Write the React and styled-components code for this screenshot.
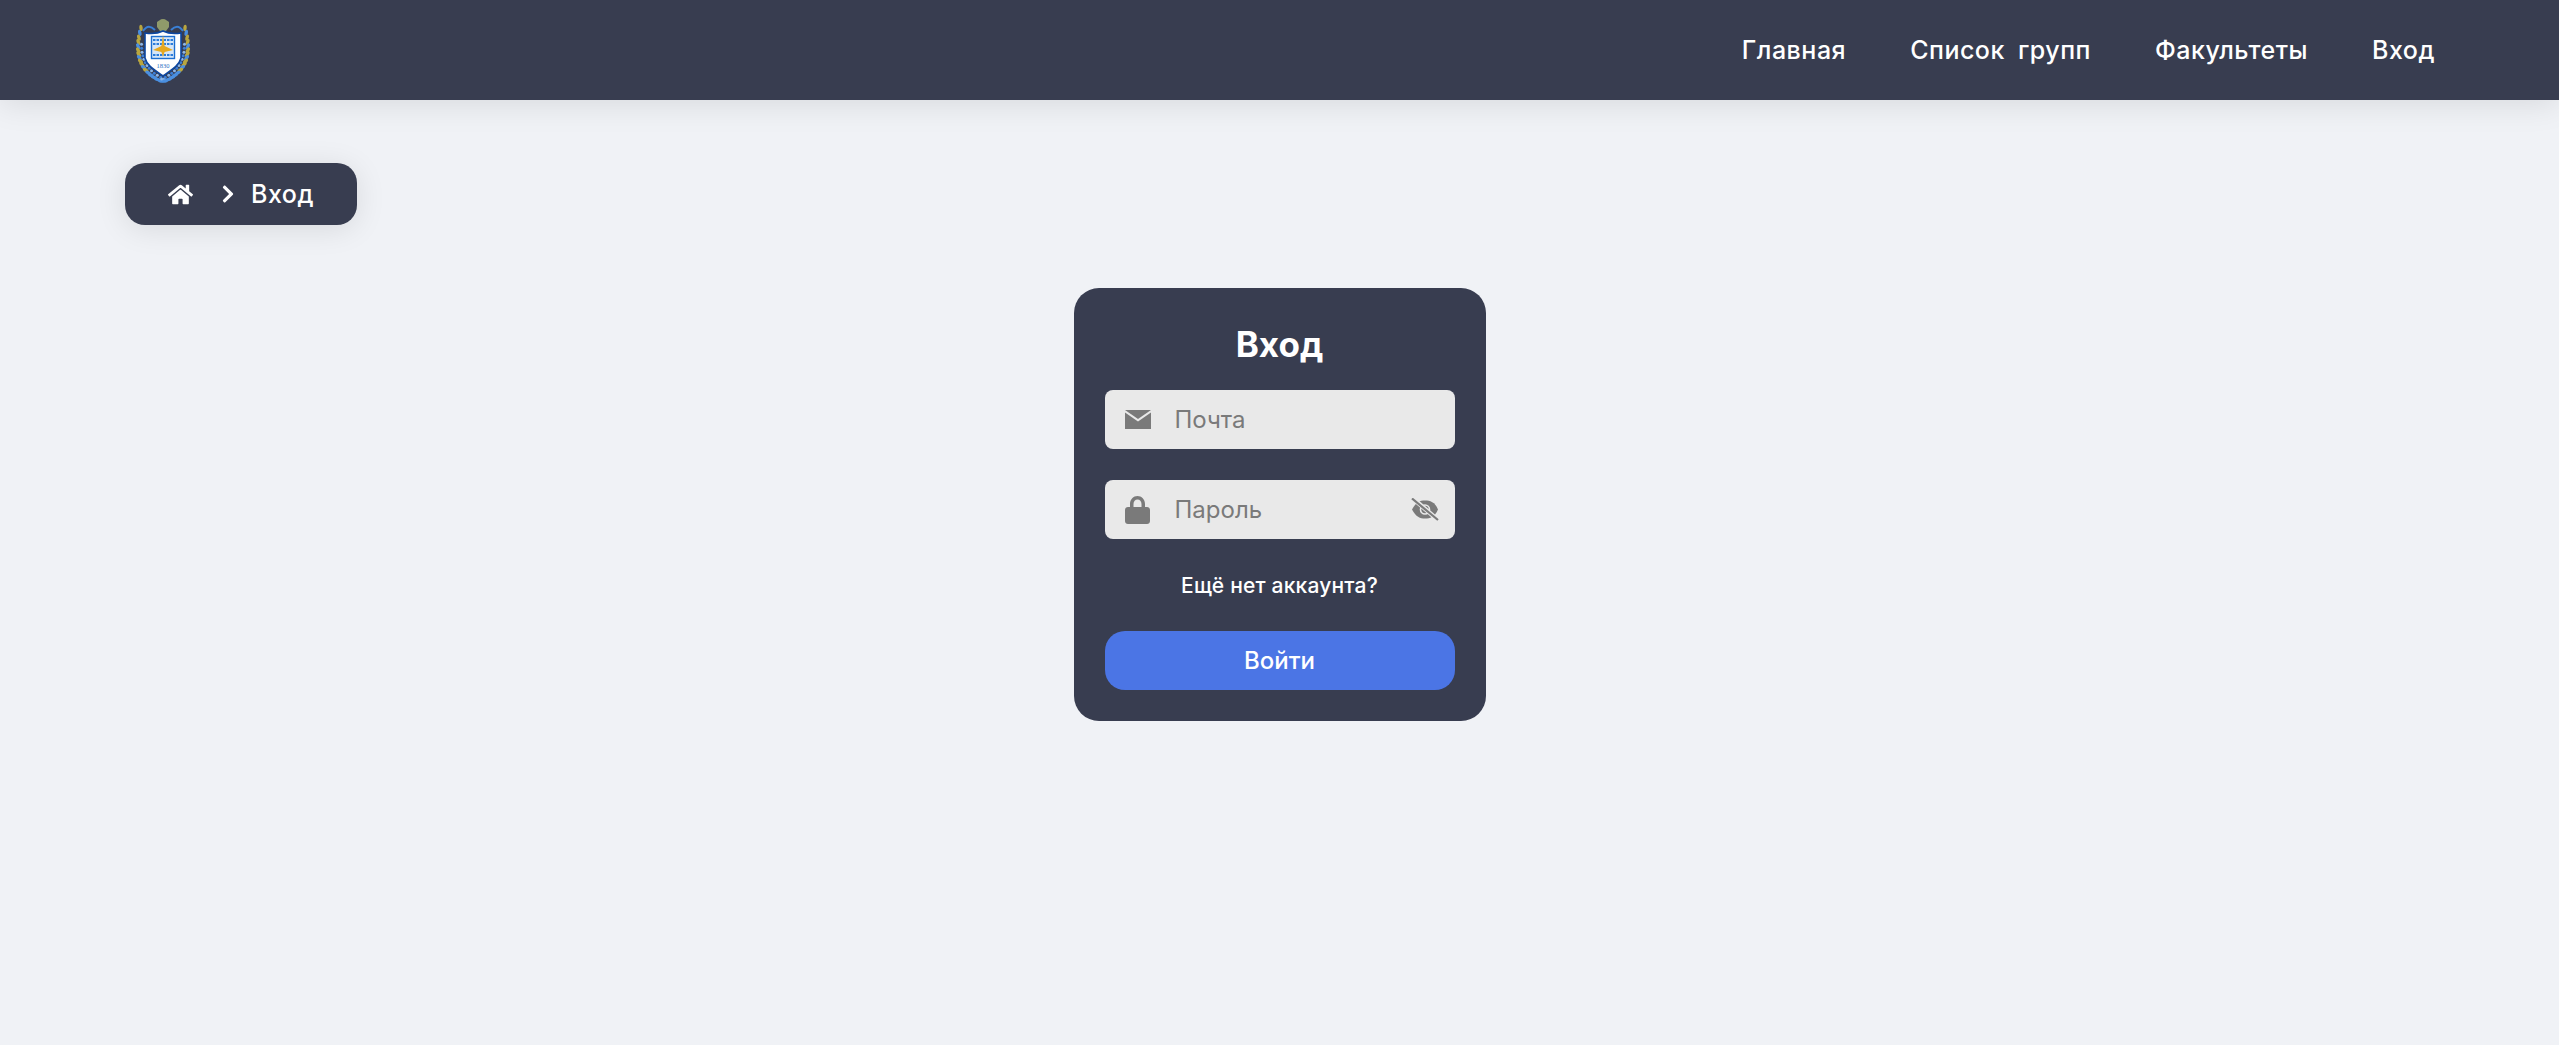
import React from 'react';
import styled, { createGlobalStyle } from 'styled-components';
import { FaHome, FaChevronRight } from 'react-icons/fa';

const GlobalStyle = createGlobalStyle`
  html, body { margin: 0; padding: 0; }
  body {
    min-height: 100vh;
    background: #f0f2f6;
    font-family: "Inter", "Noto Sans", "Liberation Sans", sans-serif;
  }
  * { box-sizing: border-box; }
`;

// leaves of the wreath, along one curve from the top of the crest to its foot
const leaves = Array.from({ length: 17 }, (_, i) => {
  const t = i / 16;
  const x = (1 - t) * (1 - t) * 5 + 2 * t * (1 - t) * -6 + t * t * 25;
  const y = (1 - t) * (1 - t) * 10 + 2 * t * (1 - t) * 50 + t * t * 63;
  const angle = -5 - t * 75;
  return { x, y, angle, blue: i % 3 === 1 || i > 11 };
});

const Wreath = () => (
  <g>
    {leaves.map((l, i) => (
      <ellipse
        key={i}
        cx={l.x}
        cy={l.y}
        rx="1.7"
        ry="3.2"
        transform={`rotate(${l.angle} ${l.x} ${l.y})`}
        fill={l.blue ? '#4a8fe0' : '#b9a63f'}
      />
    ))}
    {leaves.slice(4).map((l, i) => (
      <circle key={i} cx={l.x + 3.4} cy={l.y - 2} r="1.5" fill={i % 2 ? '#3d7fd6' : '#8db6e8'} />
    ))}
  </g>
);

const Logo = () => (
  <LogoSvg viewBox="0 0 54 65" aria-hidden="true">
    <Wreath />
    <g transform="matrix(-1 0 0 1 54 0)"><Wreath /></g>
    <path d="M7 13 C11 7 15 8 19 12" fill="none" stroke="#3a7fd5" strokeWidth="2" />
    <path d="M47 13 C43 7 39 8 35 12" fill="none" stroke="#3a7fd5" strokeWidth="2" />
    <path d="M27 1 C30 1 31 3 33 4 L33 9 L30 13 L30 17 H24 L24 13 L21 9 L21 4 C23 3 24 1 27 1 Z" fill="#8f9a6a" />
    <path d="M9 15 C15 16 21 16 27 13 C33 16 39 16 45 15 L45 40 C43 48 35 52 27 58 C19 52 11 48 9 40 Z" fill="#fff" stroke="#0d47a1" strokeWidth="1.6" />
    <rect x="15.5" y="18.5" width="23" height="22" fill="#d5e6f8" stroke="#1d6fd1" strokeWidth="1.4" />
    <path d="M17 22 H37 M17 26 H37 M17 37 H37" stroke="#2c7ddb" strokeWidth="1.8" strokeDasharray="2.5 1" />
    <path d="M27 17 L28.6 28 L37 32 L28.6 34 L27 39 L25.4 34 L17 32 L25.4 28 Z" fill="#e6a820" />
    <text x="27" y="50" textAnchor="middle" fontSize="6.5" fontFamily="Liberation Serif, serif" fill="#2c6fc4">1830</text>
  </LogoSvg>
);

const MailIcon = () => (
  <svg width="26" height="19" viewBox="0 0 26 19" fill="currentColor" aria-hidden="true">
    <path d="M0 0 H26 L13 9 Z" />
    <path d="M0 2.6 L13 11.6 L26 2.6 V19 H0 Z" />
  </svg>
);

const LockIcon = () => (
  <svg width="25" height="28" viewBox="0 0 25 28" fill="currentColor" aria-hidden="true">
    <path fillRule="evenodd" d="M5 11 V8 C5 3.4 8.4 0 12.5 0 C16.6 0 20 3.4 20 8 V11 H22 C23.7 11 25 12.3 25 14 V25 C25 26.7 23.7 28 22 28 H3 C1.3 28 0 26.7 0 25 V14 C0 12.3 1.3 11 3 11 Z M8.5 11 H16.5 V8 C16.5 5.4 14.8 3.5 12.5 3.5 C10.2 3.5 8.5 5.4 8.5 8 Z" />
  </svg>
);

const EyeOffIcon = () => (
  <svg width="28" height="23" viewBox="0 0 28 23" aria-hidden="true">
    <path d="M1 11.5 C5 4 9 2.5 14 2.5 C19 2.5 24 4 27 11.5 C24 19 19 20.5 14 20.5 C9 20.5 5 19 1 11.5 Z" fill="currentColor" />
    <circle cx="14" cy="11.5" r="4.5" fill="none" stroke="#e9e9e9" strokeWidth="1.6" />
    <path d="M2 0.5 L27 22" stroke="#e9e9e9" strokeWidth="4.5" />
    <path d="M1 0.5 L27 22" stroke="currentColor" strokeWidth="2.2" />
  </svg>
);

const App = () => (
  <>
    <GlobalStyle />
    <Header>
      <LogoLink href="#"><Logo /></LogoLink>
      <Nav>
        <NavLink href="#">Главная</NavLink>
        <NavLink href="#">Список групп</NavLink>
        <NavLink href="#">Факультеты</NavLink>
        <NavLink href="#">Вход</NavLink>
      </Nav>
    </Header>
    <Main>
      <Breadcrumbs>
        <FaHome size={25} />
        <Chevron><FaChevronRight size={20} /></Chevron>
        <CrumbText>Вход</CrumbText>
      </Breadcrumbs>
      <Card>
        <Title>Вход</Title>
        <Field>
          <FieldIcon><MailIcon /></FieldIcon>
          <Input type="text" placeholder="Почта" />
        </Field>
        <Field>
          <FieldIcon><LockIcon /></FieldIcon>
          <Input type="password" placeholder="Пароль" />
          <EyeIcon><EyeOffIcon /></EyeIcon>
        </Field>
        <RegisterLink href="#">Ещё нет аккаунта?</RegisterLink>
        <SubmitButton type="button">Войти</SubmitButton>
      </Card>
    </Main>
  </>
);

const Header = styled.header`
  height: 100px;
  background: #383d50;
  display: flex;
  align-items: center;
  justify-content: space-between;
  padding: 0 124px 0 136px;
  box-shadow: 0 4px 30px rgba(0, 0, 0, 0.1);
`;

const LogoLink = styled.a`
  display: flex;
`;

const LogoSvg = styled.svg`
  width: 54px;
  height: 65px;
`;

const Nav = styled.nav`
  display: flex;
  gap: 64px;
`;

const NavLink = styled.a`
  color: #fff;
  font-size: 25px;
  font-weight: 500;
  letter-spacing: 0.5px;
  word-spacing: 6px;
  text-decoration: none;
`;

const Main = styled.main`
  padding: 63px 125px 0;
  display: flex;
  flex-direction: column;
  align-items: flex-start;
`;

const Breadcrumbs = styled.div`
  width: 232px;
  height: 62px;
  border-radius: 20px;
  background: #383d50;
  color: #fff;
  display: flex;
  align-items: center;
  padding-left: 43px;
  box-shadow: 0 4px 30px rgba(0, 0, 0, 0.1);
`;

const Chevron = styled.span`
  display: flex;
  margin-left: 25px;
  margin-right: 13px;
`;

const CrumbText = styled.span`
  font-size: 25px;
  font-weight: 500;
  letter-spacing: 0.5px;
`;

const Card = styled.form`
  align-self: center;
  width: 412px;
  margin-top: 63px;
  padding: 31px;
  border-radius: 25px;
  background: #383d50;
  display: flex;
  flex-direction: column;
`;

const Title = styled.h1`
  margin: 0 0 20px;
  color: #fff;
  font-size: 35px;
  line-height: 51px;
  font-weight: 700;
  text-align: center;
`;

const Field = styled.div`
  height: 59px;
  margin-bottom: 31px;
  border-radius: 8px;
  background: #e9e9e9;
  color: #7a7a7a;
  display: flex;
  align-items: center;
`;

const FieldIcon = styled.span`
  width: 68px;
  padding-left: 20px;
  display: flex;
  flex-shrink: 0;
`;

const EyeIcon = styled.span`
  display: flex;
  margin-right: 16px;
`;

const Input = styled.input`
  flex: 1;
  min-width: 0;
  height: 100%;
  padding: 0 0 0 2px;
  border: 0;
  outline: 0;
  background: transparent;
  font-family: inherit;
  font-size: 24px;
  &::placeholder { color: #7a7a7a; opacity: 1; }
`;

const RegisterLink = styled.a`
  color: #fff;
  font-size: 21px;
  font-weight: 500;
  letter-spacing: 0.2px;
  line-height: 24px;
  text-align: center;
  text-decoration: none;
  margin: 4px 0 33px;
`;

const SubmitButton = styled.button`
  height: 59px;
  border: 0;
  border-radius: 20px;
  background: #4b75e5;
  color: #fff;
  font-family: inherit;
  font-size: 24px;
  font-weight: 500;
`;

export default App;
